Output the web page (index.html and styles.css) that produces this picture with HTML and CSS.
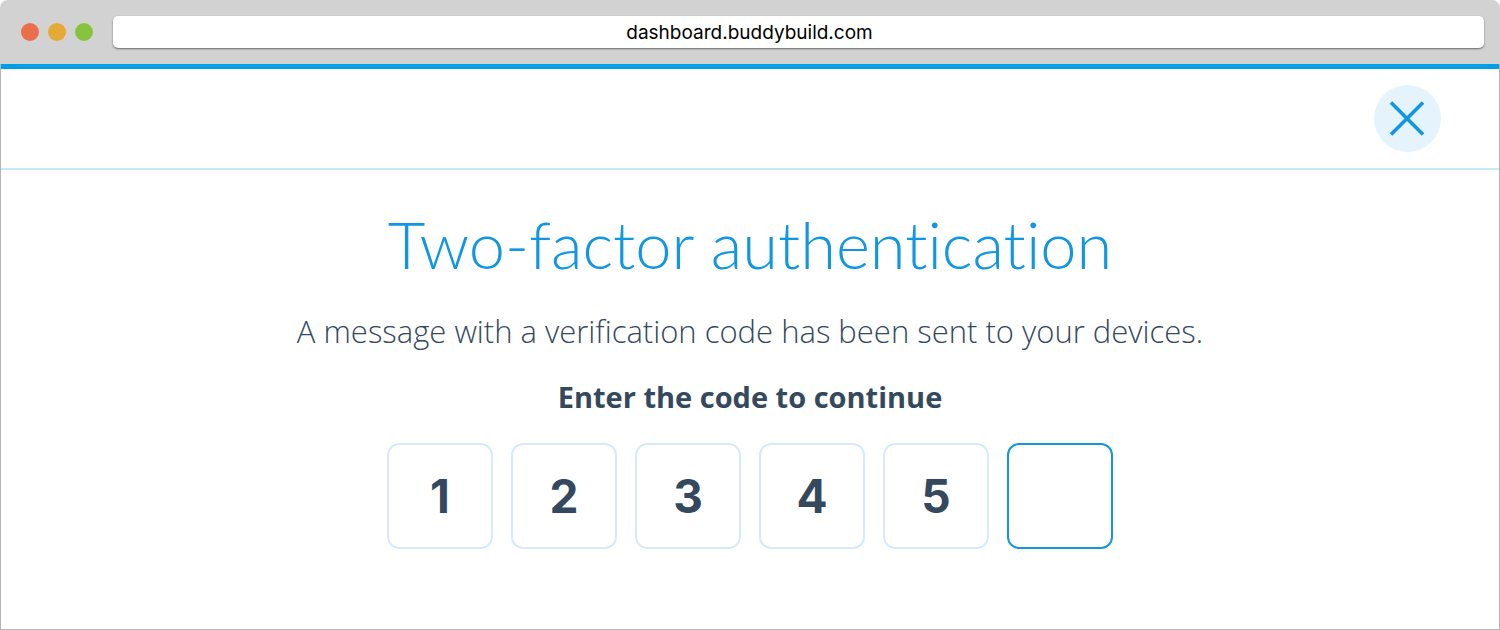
FILE: index.html
```html
<!DOCTYPE html>
<html lang="en">
<head>
<meta charset="utf-8">
<meta name="viewport" content="width=device-width, initial-scale=1">
<title>Two-factor authentication</title>
<link rel="stylesheet" href="styles.css">
</head>
<body>
<div class="browser">
  <header class="toolbar">
    <span class="dot dot-red"></span>
    <span class="dot dot-amber"></span>
    <span class="dot dot-green"></span>
    <input class="address" type="text" aria-label="Address" value="dashboard.buddybuild.com">
  </header>
  <div class="page">
    <div class="topbar">
      <button class="close" type="button" aria-label="Close">
        <svg class="close-icon" viewBox="0 0 37 37" aria-hidden="true"><path d="M2 2.5L34 34.5M34 2.5L2 34.5" fill="none" stroke="currentColor" stroke-width="3.6"/></svg>
      </button>
    </div>
    <main class="content">
      <h1 class="title">Two-factor authentication</h1>
      <p class="message">A message with a verification code has been sent to your devices.</p>
      <form class="code-form">
        <h2 class="prompt" id="prompt">Enter the code to continue</h2>
        <div class="digits" role="group" aria-labelledby="prompt">
          <input class="digit" type="text" inputmode="numeric" maxlength="1" aria-label="Digit 1" value="1">
          <input class="digit" type="text" inputmode="numeric" maxlength="1" aria-label="Digit 2" value="2">
          <input class="digit" type="text" inputmode="numeric" maxlength="1" aria-label="Digit 3" value="3">
          <input class="digit" type="text" inputmode="numeric" maxlength="1" aria-label="Digit 4" value="4">
          <input class="digit" type="text" inputmode="numeric" maxlength="1" aria-label="Digit 5" value="5">
          <input class="digit digit-active" type="text" inputmode="numeric" maxlength="1" aria-label="Digit 6">
        </div>
      </form>
    </main>
  </div>
</div>
</body>
</html>
```
FILE: styles.css
```css
* { box-sizing: border-box; }
body { margin: 0; background: #fff; color: #34495e; font-family: "Open Sans", sans-serif; font-variant-ligatures: none; }
.browser { min-height: 100vh; display: flex; flex-direction: column; border-radius: 8px 8px 0 0; overflow: hidden; }
.toolbar { display: flex; align-items: center; gap: 9px; height: 64px; padding: 0 16px 0 21px; background: #d2d2d2; }
.dot { width: 18px; height: 18px; border-radius: 50%; }
.dot-red { background: #ea6e4c; }
.dot-amber { background: #e6a935; }
.dot-green { background: #86c440; }
.address { flex: 1; min-width: 0; height: 32px; margin-left: 11px; padding: 0 98px 0 0; border: 0; border-radius: 5px; background: #fff; box-shadow: 0 1px 2px rgba(0, 0, 0, 0.5); color: #000; font: 19px Inter, sans-serif; text-align: center; }
.page { flex: 1; border: 1px solid #b5b5b5; border-top: 0; }
.topbar { display: flex; align-items: center; justify-content: flex-end; height: 106px; padding: 0 58px; border-top: 5px solid #009fe8; border-bottom: 2px solid #c9e8f7; }
.close { display: grid; place-items: center; width: 67px; height: 67px; padding: 0; border: 0; border-radius: 50%; background: #e5f4fc; color: #1096e3; }
.close-icon { width: 37px; height: 37px; }
.content { padding: 32px 24px; text-align: center; }
.title { margin: 0; color: #1096e3; font-family: Lato, sans-serif; font-size: 65px; font-weight: 300; line-height: 84px; }
.message { margin: 27px 0 0; font-size: 31px; font-weight: 300; line-height: 36px; }
.prompt { margin: 30px 0 28px; font-size: 29px; font-weight: 700; line-height: 36px; }
.digits { display: flex; justify-content: center; gap: 18px; }
.digit { width: 106px; height: 106px; padding: 0; border: 2px solid #d4ebf9; border-radius: 12px; background: #fff; color: #34495e; font: 700 46px Inter, sans-serif; text-align: center; outline: 0; }
.digit-active, .digit:focus { border-color: #1096e3; }
```
